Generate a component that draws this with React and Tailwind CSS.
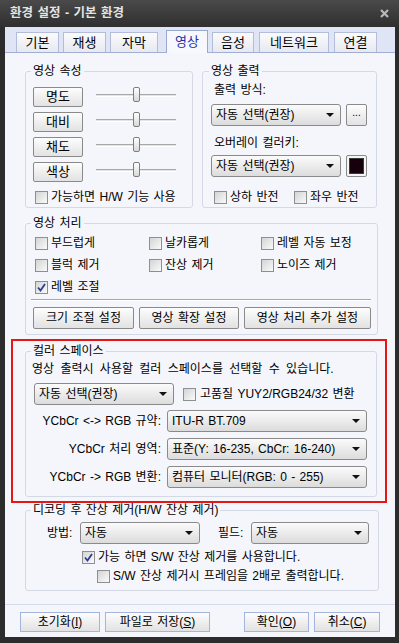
import React from "react";

const font = "font-['Liberation_Sans','Noto_Sans_CJK_KR',sans-serif]";

function Check({ checked }) {
  return (
    <span className="w-[13px] h-[13px] shrink-0 border border-[#8e8f8f] bg-gradient-to-br from-[#d4d4d4] to-[#fafafa] flex items-center justify-center">
      {checked && (
        <svg width="11" height="11" viewBox="0 0 11 11">
          <path d="M2 5.5 L4.5 8.5 L9 2" fill="none" stroke="#2a3d94" strokeWidth="1.8" />
        </svg>
      )}
    </span>
  );
}

function CheckRow({ label, checked, className = "" }) {
  return (
    <div className={`h-[16px] flex items-center gap-[3px] ${className}`}>
      <Check checked={checked} />
      <span className="whitespace-nowrap">{label}</span>
    </div>
  );
}

function Select({ value, className = "" }) {
  return (
    <div
      className={`h-[22px] shrink-0 border border-[#8a8a8a] rounded-[3px] bg-gradient-to-b from-[#fbfbfb] to-[#dcdcdc] flex items-center pl-[4px] pr-[6px] ${className}`}
    >
      <span className="flex-1 whitespace-nowrap overflow-hidden">{value}</span>
      <svg width="8" height="4" viewBox="0 0 8 4">
        <path d="M0 0 H8 L4 4 Z" fill="#111" />
      </svg>
    </div>
  );
}

function Button({ children, className = "" }) {
  return (
    <div
      className={`shrink-0 border border-[#8a8a8a] rounded-[2px] bg-gradient-to-b from-[#fdfdfd] to-[#e2e2e2] flex items-center justify-center whitespace-nowrap ${className}`}
    >
      {children}
    </div>
  );
}

function Slider() {
  return (
    <div className="relative w-[80px] h-[20px]">
      <div className="absolute left-0 right-0 top-[7px] h-[3px] border-t border-[#a8a8a8] border-b border-b-white bg-[#e4e4e4]" />
      <div className="absolute left-[37px] top-0 w-[7px] h-[15px] rounded-[2px] border border-[#7d7d7d] bg-gradient-to-b from-white to-[#d8d8d8]" />
    </div>
  );
}

function Group({ title, className = "", children }) {
  return (
    <fieldset className={`border border-[#d3d9e5] rounded-[3px] ${className}`}>
      <legend className="px-[2px] -ml-[2px] leading-[14px]">{title}</legend>
      {children}
    </fieldset>
  );
}

const tabs = [
  { label: "기본", w: "w-[43px]", ml: "ml-[11px]" },
  { label: "재생", w: "w-[43px]", ml: "ml-[4px]" },
  { label: "자막", w: "w-[48px]", ml: "ml-[4px]" },
  { label: "영상", w: "w-[42px]", ml: "ml-[8px]", active: true },
  { label: "음성", w: "w-[42px]", ml: "ml-[4px]" },
  { label: "네트워크", w: "w-[70px]", ml: "ml-[5px]" },
  { label: "연결", w: "w-[43px]", ml: "ml-[5px]" },
];

export default function App() {
  return (
    <div className={`w-[399px] h-[643px] bg-[#2c2c2c] flex flex-col text-[12px] text-black [word-spacing:1px] ${font}`}>
      {/* Title bar */}
      <div className="h-[27px] shrink-0 flex items-center justify-between pl-[10px] pr-[10px] bg-gradient-to-b from-[#4a4a4a] to-[#2f2f2f]">
        <span className="text-[12.5px] font-bold text-[#e4e4e4] leading-none">환경 설정 - 기본 환경</span>
        <svg width="9" height="9" viewBox="0 0 9 9">
          <path d="M1 1 L8 8 M8 1 L1 8" stroke="#b9b9b9" strokeWidth="2.2" />
        </svg>
      </div>

      {/* Client */}
      <div className="flex-1 ml-[5px] mr-[4px] mb-[6px] bg-[#f5f6fb] flex flex-col">
        {/* Tabs */}
        <div className="h-[26px] shrink-0 flex items-end bg-[#dfe5f5] border-b border-[#a3afd2]">
          {tabs.map((t) =>
            t.active ? (
              <div
                key={t.label}
                className={`${t.w} ${t.ml} h-[23px] -mb-[1px] border border-b-0 border-[#9aa7cf] bg-[#f7f8fd] text-[#1f2fa8] flex items-center justify-center text-[13px]`}
              >
                {t.label}
              </div>
            ) : (
              <div
                key={t.label}
                className={`${t.w} ${t.ml} h-[20px] border border-b-0 border-[#b3bcd8] bg-gradient-to-b from-[#fbfbfd] to-[#e6e9f1] flex items-center justify-center text-[13px]`}
              >
                {t.label}
              </div>
            )
          )}
        </div>

        <div className="flex flex-col pl-[20px] pr-[18px]">
          {/* Row 1 */}
          <div className="flex gap-[9px] mt-[11px]">
            <Group title="영상 속성" className="w-[168px] h-[144px] pl-[7px] pr-[6px] pt-[9px]">
              <div className="flex flex-col gap-[5px]">
                {["명도", "대비", "채도", "색상"].map((l) => (
                  <div key={l} className="flex items-start gap-[13px]">
                    <Button className="w-[50px] h-[20px] text-[13px]">{l}</Button>
                    <Slider />
                  </div>
                ))}
              </div>
              <CheckRow label="가능하면 H/W 기능 사용" className="mt-[7px] ml-[2px]" />
            </Group>

            <Group title="영상 출력" className="w-[175px] h-[144px] pl-[8px] pr-[7px]">
              <div className="mt-[5px] ml-[3px] leading-[14px]">출력 방식:</div>
              <div className="flex gap-[5px] mt-[7px]">
                <Select value="자동 선택(권장)" className="w-[130px]" />
                <Button className="w-[21px] h-[22px] text-[10px] items-end pb-[5px]">...</Button>
              </div>
              <div className="mt-[10px] ml-[3px] leading-[14px]">오버레이 컬러키:</div>
              <div className="flex gap-[5px] mt-[5px]">
                <Select value="자동 선택(권장)" className="w-[130px]" />
                <div className="w-[21px] h-[22px] border border-[#8a8a8a] rounded-[2px] bg-[#f4f4f4] p-[2px]">
                  <div className="w-full h-full bg-[#16000c] border border-[#3a3a3a]" />
                </div>
              </div>
              <div className="flex mt-[12px] ml-[3px]">
                <CheckRow label="상하 반전" className="w-[80px]" />
                <CheckRow label="좌우 반전" />
              </div>
            </Group>
          </div>

          {/* 영상 처리 */}
          <Group title="영상 처리" className="mt-[8px] h-[119px] pl-[7px] pr-[6px] pt-[5px]">
            <div className="grid grid-cols-[114px_112px_1fr] gap-y-[6px] ml-[2px]">
              <CheckRow label="부드럽게" />
              <CheckRow label="날카롭게" />
              <CheckRow label="레벨 자동 보정" />
              <CheckRow label="블럭 제거" />
              <CheckRow label="잔상 제거" />
              <CheckRow label="노이즈 제거" />
              <CheckRow label="레벨 조절" checked />
            </div>
            <div className="mt-[4px] -ml-[2px] h-[2px] border-t border-[#a9a9a9] border-b border-b-white" />
            <div className="flex mt-[6px]">
              <Button className="w-[101px] h-[22px]">크기 조절 설정</Button>
              <Button className="w-[100px] h-[22px] ml-[5px]">영상 확장 설정</Button>
              <Button className="w-[127px] h-[22px] ml-[5px]">영상 처리 추가 설정</Button>
            </div>
          </Group>

          {/* 컬러 스페이스 (highlighted) */}
          <div className="mt-[4px] -ml-[14px] -mr-[10px] h-[164px] border-2 border-[#e81515] pt-[3px] pl-[12px] pr-[8px]">
            <Group title="컬러 스페이스" className="h-[153px] pl-[7px] pr-[9px] pt-[4px]">
              <div className="leading-[14px] -ml-[1px] [word-spacing:3px] whitespace-nowrap">
                영상 출력시 사용할 컬러 스페이스를 선택할 수 있습니다.
              </div>
              <div className="flex items-center mt-[7px]">
                <Select value="자동 선택(권장)" className="w-[140px] ml-[1px]" />
                <CheckRow label="고품질 YUY2/RGB24/32 변환" className="ml-[9px] gap-[4px]" />
              </div>
              {[
                ["YCbCr <-> RGB 규약:", "ITU-R BT.709", "mt-[5px]"],
                ["YCbCr 처리 영역:", "표준(Y: 16-235, CbCr: 16-240)", "mt-[6px]"],
                ["YCbCr -> RGB 변환:", "컴퓨터 모니터(RGB: 0 - 255)", "mt-[6px]"],
              ].map(([l, v, m]) => (
                <div key={l} className={`flex items-center ${m}`}>
                  <span className="w-[128px] text-right whitespace-nowrap">{l}</span>
                  <Select value={v} className="w-[200px] ml-[6px]" />
                </div>
              ))}
            </Group>
          </div>

          {/* 디코딩 후 잔상 제거 */}
          <Group title="디코딩 후 잔상 제거(H/W 잔상 제거)" className="h-[88px] pl-[7px] pr-[9px] pt-[5px]">
            <div className="flex items-center">
              <span className="ml-[14px] w-[33px]">방법:</span>
              <Select value="자동" className="w-[120px]" />
              <span className="ml-[18px] w-[33px]">필드:</span>
              <Select value="자동" className="w-[118px]" />
            </div>
            <CheckRow label="가능 하면 S/W 잔상 제거를 사용합니다." checked className="mt-[5px] ml-[49px]" />
            <CheckRow label="S/W 잔상 제거시 프레임을 2배로 출력합니다." className="mt-[3px] ml-[64px]" />
          </Group>
        </div>

        {/* Footer */}
        <div className="mt-[13px] h-[1px] bg-[#d6dbe8]" />
        <div className="flex mt-[7px] pl-[15px] pr-[15px]">
          <Button className="w-[80px] h-[20px] border-[#a5b4dc] rounded-none">
            초기화(<span className="underline">I</span>)
          </Button>
          <Button className="w-[105px] h-[20px] ml-[5px] border-[#a5b4dc] rounded-none">
            파일로 저장(<span className="underline">S</span>)
          </Button>
          <Button className="w-[65px] h-[20px] ml-auto border-[#a5b4dc] rounded-none">
            확인(<span className="underline">O</span>)
          </Button>
          <Button className="w-[66px] h-[20px] ml-[5px] border-[#a5b4dc] rounded-none">
            취소(<span className="underline">C</span>)
          </Button>
        </div>
      </div>
    </div>
  );
}
